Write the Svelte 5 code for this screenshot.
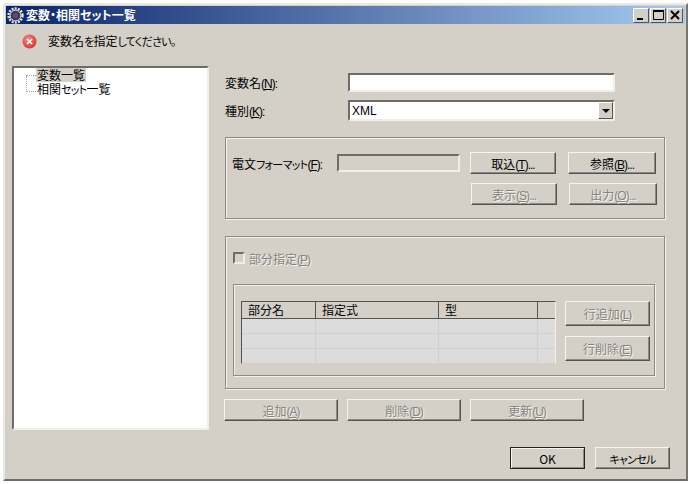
<script>
  const columns = ['部分名', '指定式', '型', ''];
  const rows = [0, 1, 2];
</script>

{#snippet mn(c)}<span class="ascii">(<u>{c}</u>)</span>{/snippet}

<div class="window">
  <div class="titlebar">
    <svg class="app-icon" width="17" height="17" viewBox="0 0 17 17">
      <circle cx="8.5" cy="8.5" r="7" fill="none" stroke="#e8e4da" stroke-width="2.4" stroke-dasharray="2 1.2" />
      <circle cx="8.5" cy="8.5" r="5.4" fill="#3c3a58" stroke="#f4f2ec" stroke-width="1" />
      <circle cx="8.5" cy="8.5" r="2.6" fill="#55527a" />
    </svg>
    <span class="title">変数・相関セット一覧</span>
    <div class="caption-buttons">
      <button class="caption"><svg width="10" height="10" viewBox="0 0 10 10"><rect x="1" y="8" width="6" height="2" fill="#000" /></svg></button>
      <button class="caption"><svg width="11" height="10" viewBox="0 0 11 10"><path d="M0.5 1.5h10v8h-10z" fill="none" stroke="#000" stroke-width="1" /><rect x="0" y="0" width="11" height="2" fill="#000" /></svg></button>
      <button class="caption"><svg width="10" height="10" viewBox="0 0 10 10"><path d="M1 1l8 8M9 1l-8 8" stroke="#000" stroke-width="1.8" /></svg></button>
    </div>
  </div>

  <div class="message">
    <svg width="15" height="15" viewBox="0 0 15 15">
      <defs>
        <radialGradient id="err" cx="0.4" cy="0.35" r="0.75">
          <stop offset="0" stop-color="#f88a84" />
          <stop offset="1" stop-color="#d62a2a" />
        </radialGradient>
      </defs>
      <circle cx="7.5" cy="7.5" r="7" fill="url(#err)" />
      <path d="M5 5l5 5M10 5l-5 5" stroke="#fff" stroke-width="1.7" />
    </svg>
    <span>変数名<span class="kana">を</span>指定<span class="kana">してください。</span></span>
  </div>

  <div class="main">
    <div class="tree sunken">
      <div class="node first"><span class="branch"></span><span class="node-label selected">変数一覧</span></div>
      <div class="node last"><span class="branch"></span><span class="node-label">相関<span class="kana">セット</span>一覧</span></div>
    </div>

    <div class="form">
      <div class="field name-field">
        <label for="var-name">変数名{@render mn('N')}<span class="ascii">:</span></label>
        <input id="var-name" class="sunken" type="text" />
      </div>
      <div class="field kind-field">
        <span class="label">種別{@render mn('K')}<span class="ascii">:</span></span>
        <div class="select sunken">
          <span class="select-value">XML</span>
          <span class="select-arrow"><i></i></span>
        </div>
      </div>

      <div class="group format-group">
        <div class="format-row">
          <span class="format-label">電文<span class="kana">フォーマット</span>{@render mn('F')}<span class="ascii">:</span></span>
          <div class="format-input sunken"></div>
          <button class="btn w-86">取込{@render mn('T')}<span class="ascii">...</span></button>
          <button class="btn w-88">参照{@render mn('B')}<span class="ascii">...</span></button>
        </div>
        <div class="format-row actions">
          <button class="btn w-86" disabled>表示{@render mn('S')}<span class="ascii">...</span></button>
          <button class="btn w-88" disabled>出力{@render mn('O')}<span class="ascii">...</span></button>
        </div>
      </div>

      <div class="group part-group">
        <div class="check-row">
          <span class="checkbox"></span>
          <span class="disabled-text">部分指定{@render mn('P')}</span>
        </div>
        <div class="group inner-group">
          <div class="grid">
            <div class="grid-head">
              {#each columns as col}
                <div class="head-cell">{col}</div>
              {/each}
            </div>
            {#each rows as r (r)}
              <div class="grid-row">
                {#each columns as col}
                  <div class="grid-cell"></div>
                {/each}
              </div>
            {/each}
          </div>
          <div class="row-buttons">
            <button class="btn row-btn" disabled>行追加{@render mn('L')}</button>
            <button class="btn row-btn" disabled>行削除{@render mn('E')}</button>
          </div>
        </div>
      </div>

      <div class="crud">
        <button class="btn crud-btn" disabled>追加{@render mn('A')}</button>
        <button class="btn crud-btn" disabled>削除{@render mn('D')}</button>
        <button class="btn crud-btn" disabled>更新{@render mn('U')}</button>
      </div>
    </div>
  </div>

  <div class="footer">
    <button class="btn default">OK</button>
    <button class="btn cancel"><span class="kana">キャンセル</span></button>
  </div>
</div>

<style>
  :global(body) {
    background: #fff;
    font-family: "Noto Sans CJK JP", "Liberation Sans", sans-serif;
    font-size: 12px;
    font-feature-settings: "palt";
    color: #000;
  }

  .kana {
    font-size: 11px;
    letter-spacing: -0.7px;
  }

  .ascii {
    font-family: "Liberation Sans", sans-serif;
    font-size: 12px;
    letter-spacing: -1px;
  }

  .window {
    box-sizing: border-box;
    width: 685px;
    height: 478px;
    margin: 3px 0 0 3px;
    background: #d4d0c8;
    border-top: 2px solid #ece9e2;
    border-left: 2px solid #ece9e2;
    border-right: 2px solid #77756f;
    border-bottom: 2px solid #6e6c68;
    display: flex;
    flex-direction: column;
  }

  .titlebar {
    display: flex;
    align-items: center;
    height: 18px;
    margin: 1px 1px 0;
    padding: 0 1px;
    background: linear-gradient(90deg, #0a246a, #a6caf0);
    color: #fff;
    font-weight: 700;
  }

  .app-icon {
    flex: none;
  }

  .title {
    margin-left: 2px;
    line-height: 18px;
    white-space: nowrap;
  }

  .caption-buttons {
    margin-left: auto;
    display: flex;
    gap: 1px;
    margin-right: 1px;
  }

  .caption {
    box-sizing: border-box;
    width: 16px;
    height: 15px;
    padding: 0;
    background: #d4d0c8;
    border: 1px solid;
    border-color: #fff #555 #555 #fff;
    display: flex;
    align-items: center;
    justify-content: center;
  }

  .message {
    height: 34px;
    display: flex;
    align-items: center;
    padding-left: 17px;
    gap: 11px;
  }

  .message > span {
    line-height: 16px;
  }

  .main {
    display: flex;
    align-items: flex-start;
    padding-left: 7px;
    margin-top: 8px;
  }

  .sunken {
    box-sizing: border-box;
    background: #fff;
    border: 2px solid;
    border-color: #6f6d69 #f0eee8 #f0eee8 #6f6d69;
  }

  .tree {
    width: 197px;
    height: 364px;
    flex: none;
    padding: 0 0 0 12px;
  }

  .node {
    display: flex;
    height: 14px;
    align-items: flex-start;
    white-space: nowrap;
  }

  .branch {
    box-sizing: border-box;
    width: 10px;
    height: 8px;
    flex: none;
    border-bottom: 1px dotted #aaa;
    border-left: 1px dotted #aaa;
  }

  .node.first .branch {
    margin-top: 0;
    border-left: 0;
  }

  .node.last .branch {
    height: 16px;
    margin-top: -6px;
  }

  .node-label {
    display: block;
    height: 14px;
    padding: 0 1px;
    line-height: 14px;
  }

  .selected {
    background: #d4d0c8;
  }

  .form {
    width: 440px;
    margin-left: 16px;
    margin-top: 7px;
  }

  .field {
    display: flex;
    align-items: center;
    height: 19px;
  }

  .kind-field {
    margin-top: 8px;
    height: 21px;
  }

  .field label,
  .label {
    width: 123px;
    flex: none;
  }

  .field input {
    width: 267px;
    height: 19px;
    padding: 0;
    outline: none;
  }

  .select {
    width: 267px;
    height: 21px;
    display: flex;
    align-items: center;
    justify-content: space-between;
    padding-left: 2px;
    font-family: "Liberation Sans", sans-serif;
  }

  .select-arrow {
    box-sizing: border-box;
    width: 15px;
    height: 17px;
    background: #d4d0c8;
    border: 1px solid;
    border-color: #fff #555 #555 #fff;
    display: flex;
    align-items: center;
    justify-content: center;
  }

  .select-arrow i {
    border: 4px solid transparent;
    border-top: 4px solid #000;
    border-bottom: 0;
  }

  .group {
    box-sizing: border-box;
    border: 1px solid #8c8a86;
    box-shadow: 1px 1px 0 #f4f2ec, inset 1px 1px 0 #f4f2ec;
  }

  .format-group {
    height: 82px;
    margin-top: 16px;
    padding: 14px 7px 0 6px;
  }

  .format-row {
    display: flex;
    align-items: center;
  }

  .format-label {
    width: 105px;
    flex: none;
    white-space: nowrap;
  }

  .format-input {
    width: 123px;
    height: 18px;
    background: #d4d0c8;
    margin-right: 10px;
  }

  .format-row .btn + .btn {
    margin-left: 12px;
  }

  .actions {
    justify-content: flex-end;
    margin-top: 9px;
  }

  .btn {
    box-sizing: border-box;
    height: 22px;
    padding: 0;
    background: #d4d0c8;
    border: 1px solid;
    border-color: #f6f4ee #55534f #55534f #f6f4ee;
    box-shadow: inset -1px -1px 0 #8c8a86;
    font: inherit;
    font-feature-settings: "palt";
    color: #000;
    white-space: nowrap;
  }

  .btn:disabled,
  .disabled-text {
    color: #85837f;
    text-shadow: 1px 1px 0 #f4f2ec;
  }

  .w-86 {
    width: 86px;
  }

  .w-88 {
    width: 88px;
  }

  .part-group {
    height: 153px;
    margin-top: 17px;
    padding: 0 9px 0 7px;
  }

  .check-row {
    display: flex;
    align-items: center;
    gap: 4px;
    height: 20px;
    margin-top: 11px;
  }

  .checkbox {
    box-sizing: border-box;
    width: 12px;
    height: 12px;
    border: 2px solid;
    border-color: #6f6d69 #f0eee8 #f0eee8 #6f6d69;
    background: #d4d0c8;
  }

  .inner-group {
    display: flex;
    align-items: flex-start;
    height: 92px;
    margin-top: 16px;
    padding: 16px 0 0 7px;
  }

  .grid {
    box-sizing: border-box;
    width: 315px;
    height: 63px;
    border: 1px solid;
    border-color: #55534f #f4f2ec #f4f2ec #55534f;
    background: #dcdcdc;
  }

  .grid-head,
  .grid-row {
    display: grid;
    grid-template-columns: 74px 123px 99px 1fr;
  }

  .grid-head {
    height: 16px;
    background: #d4d0c8;
    border-bottom: 1px solid #55534f;
  }

  .head-cell {
    box-sizing: border-box;
    padding-left: 6px;
    line-height: 15px;
    border-right: 1px solid #55534f;
  }

  .head-cell:last-child {
    border-right: 0;
  }

  .grid-row {
    height: 15px;
    border-bottom: 1px solid #d4d0c8;
    box-sizing: border-box;
  }

  .grid-cell {
    border-right: 1px solid #d4d0c8;
  }

  .grid-cell:last-child {
    border-right: 0;
  }

  .row-buttons {
    display: flex;
    flex-direction: column;
    gap: 10px;
    margin-left: 9px;
  }

  .row-btn {
    width: 85px;
    height: 25px;
  }

  .crud {
    display: flex;
    gap: 9px;
    margin-top: 10px;
    margin-left: -1px;
  }

  .crud-btn {
    width: 114px;
    height: 22px;
  }

  .footer {
    display: flex;
    justify-content: flex-end;
    gap: 10px;
    padding-right: 16px;
    margin-top: auto;
    margin-bottom: 10px;
  }

  .footer .btn {
    width: 75px;
    height: 22px;
  }

  .default {
    border-color: #222;
    box-shadow: inset 1px 1px 0 #f6f4ee, inset -1px -1px 0 #8c8a86;
  }
</style>
